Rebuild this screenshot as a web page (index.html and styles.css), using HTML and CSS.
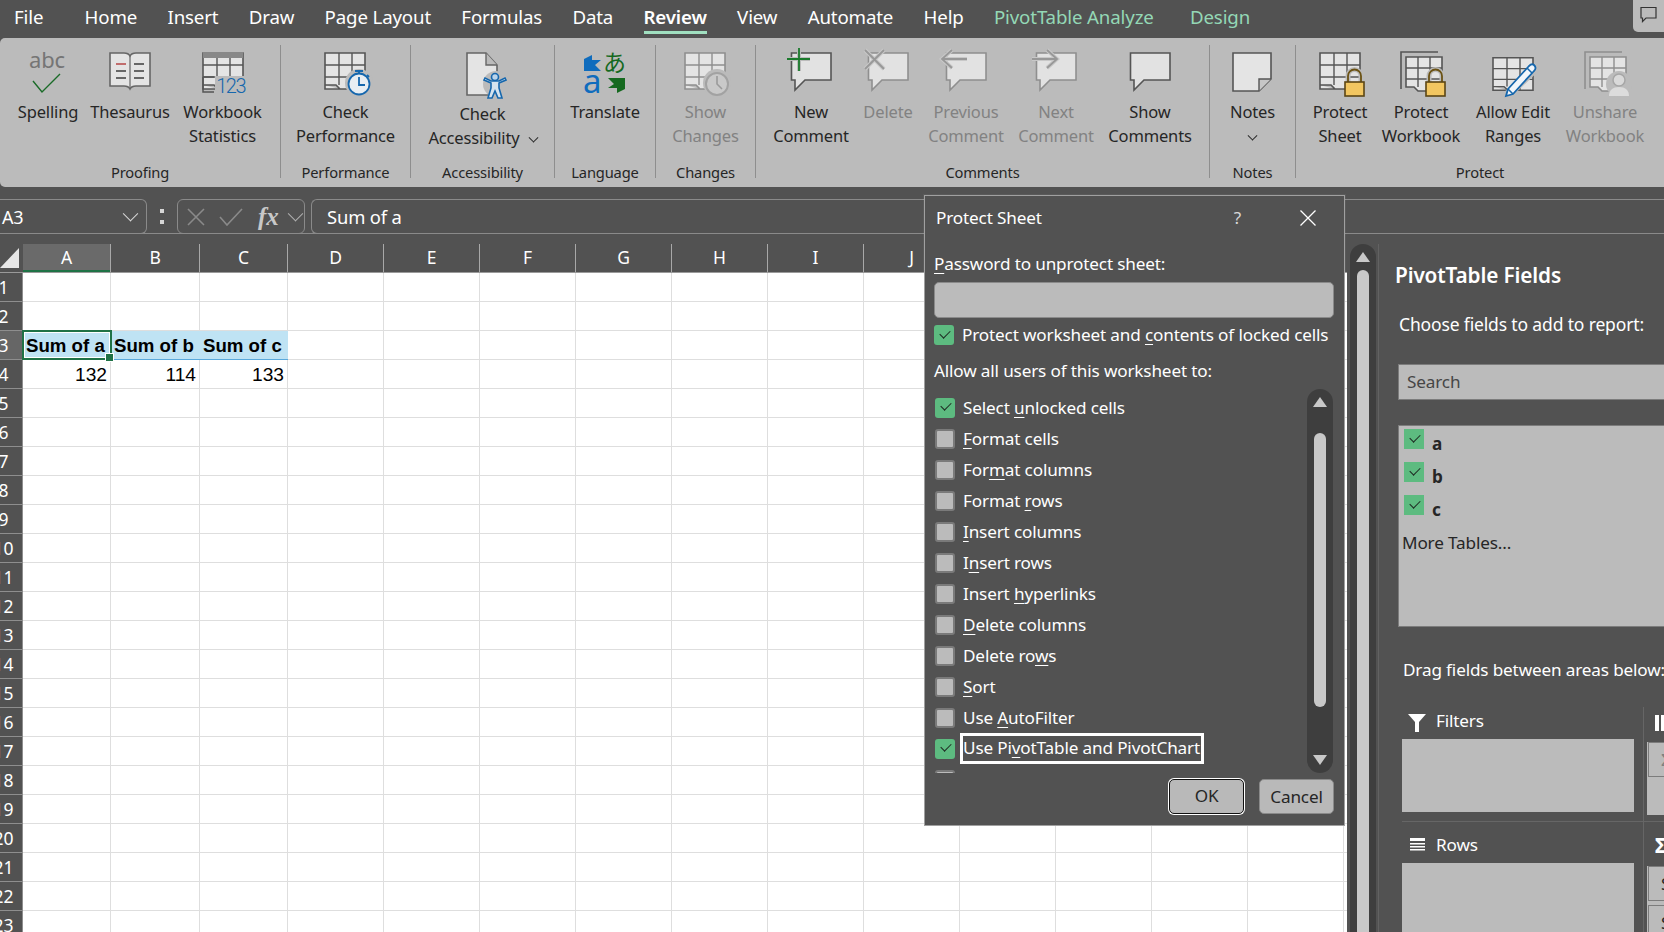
FILE: index.html
```html
<!DOCTYPE html>
<html lang="en">
<head>
<meta charset="utf-8">
<title>Protect Sheet</title>
<link rel="stylesheet" href="styles.css">
</head>
<body>
<svg class="defs" aria-hidden="true">
  <symbol id="grid" viewBox="0 0 42 42" overflow="visible">
    <path fill="#e4e4e4" stroke="currentColor" stroke-width="1.6" d="M1 2H41V38H16L12 34H1Z M1 34V38H12L16 38"/>
    <path fill="none" stroke="currentColor" stroke-width="1.4" d="M1 14H41M1 26H41M15 2V34M28 2V38"/>
  </symbol>
  <symbol id="grid2" viewBox="0 0 42 42" overflow="visible">
    <path fill="none" stroke="currentColor" stroke-width="1.6" d="M1 38V1H38"/>
    <path fill="#e4e4e4" stroke="currentColor" stroke-width="1.6" d="M6 6H42V40H18L14 36H6Z"/>
    <path fill="none" stroke="currentColor" stroke-width="1.4" d="M6 17H42M6 28H42M18 6V36M30 6V40"/>
  </symbol>
  <symbol id="bubble" viewBox="0 0 42 42" overflow="visible">
    <path fill="#e2e2e2" stroke="currentColor" stroke-width="1.6" d="M1.500 2H41V29H15L5 39V29H1.500Z"/>
  </symbol>
  <symbol id="lock" viewBox="0 0 42 42" overflow="visible">
    <path fill="none" stroke="#bbb" stroke-width="5" d="M29 32V25a6.500 6.500 0 0 1 13 0V32"/>
    <path fill="none" stroke="#6b5214" stroke-width="1.8" d="M29 32V25a6.500 6.500 0 0 1 13 0V32"/>
    <rect x="26" y="31" width="19" height="14" fill="#f2c661" stroke="#5b4514" stroke-width="1.6"/>
  </symbol>
</svg>

<header class="tabs">
  <span class="tab first">File</span>
  <span class="tab">Home</span>
  <span class="tab">Insert</span>
  <span class="tab">Draw</span>
  <span class="tab">Page Layout</span>
  <span class="tab">Formulas</span>
  <span class="tab">Data</span>
  <span class="tab active">Review</span>
  <span class="tab">View</span>
  <span class="tab">Automate</span>
  <span class="tab">Help</span>
  <span class="tab ctx">PivotTable Analyze</span>
  <span class="tab ctx">Design</span>
  <span class="comment-btn">
    <svg width="17" height="17" viewBox="0 0 17 17"><path fill="none" stroke="#333" stroke-width="1.2" d="M1 1.500H16V12H6L2.500 15.500V12H1Z"/></svg>
  </span>
</header>

<section class="ribbon">
  <div class="group g1">
    <div class="btns">
      <div class="rb w74">
        <svg class="ic" viewBox="0 0 42 42"><text x="20" y="17" class="abc">abc</text><path fill="none" stroke="#1a6b28" stroke-width="1.400" d="M6 30L15 41L33 23"/></svg>
        <span>Spelling</span>
      </div>
      <div class="rb w90">
        <svg class="ic" viewBox="0 0 42 42"><path fill="#e4e4e4" stroke="#666" stroke-width="1.6" d="M1 2H15C18 2 20 3 21 5C22 3 24 2 27 2H41V35H27C24 35 22 36 21 38C20 36 18 35 15 35H1Z"/><path fill="none" stroke="#666" stroke-width="1.2" d="M21 5V38"/><path fill="none" stroke="#b23a3a" stroke-width="1.4" d="M7 13H17"/><path fill="none" stroke="#3c3c3c" stroke-width="1.4" d="M25 13H35M7 20H17M25 20H35M7 27H17M25 27H35"/></svg>
        <span>Thesaurus</span>
      </div>
      <div class="rb w95">
        <svg class="ic" viewBox="0 0 42 42"><use href="#grid" color="#555"/><rect x="1" y="1" width="40" height="6" fill="#888"/><rect x="13" y="25" width="30" height="18" fill="#bbb"/><path fill="none" stroke="#555" stroke-width="1.5" d="M1 26H12M1 26V41H12"/><text x="43" y="42" class="n123">123</text></svg>
        <span>Workbook<br>Statistics</span>
      </div>
    </div>
    <div class="glabel">Proofing</div>
  </div>
  <i class="sep"></i>
  <div class="group g2">
    <div class="btns">
      <div class="rb">
        <svg class="ic" viewBox="0 0 42 42"><use href="#grid" color="#555"/><circle cx="35" cy="32" r="14" fill="#bbb"/><circle cx="35" cy="33" r="10.500" fill="#e8eef3" stroke="#1667ad" stroke-width="1.800"/><path fill="none" stroke="#1667ad" stroke-width="1.800" d="M35 26V34H41M31 20H39M35 20V23M43 24L45 26"/></svg>
        <span>Check<br>Performance</span>
      </div>
    </div>
    <div class="glabel">Performance</div>
  </div>
  <i class="sep"></i>
  <div class="group g3">
    <div class="btns">
      <div class="rb low">
        <svg class="ic" viewBox="0 0 42 42"><path fill="#e4e4e4" stroke="#666" stroke-width="1.6" d="M6 2H25L36 14V44H6Z"/><path fill="#bbb" stroke="#666" stroke-width="1.400" d="M25 2V14H36"/><circle cx="35" cy="33" r="13" fill="#bbb"/><circle cx="34" cy="26" r="3.500" fill="#bbd4ea" stroke="#1667ad" stroke-width="1.600"/><path fill="#d6e4ef" stroke="#1667ad" stroke-width="1.600" d="M23 29L30 32V37L27 47H31L34 40L37 47H41L38 37V32L45 29L44 27L38 30H30L24 27Z"/></svg>
        <span>Check<br>Accessibility <b class="chev gap"></b></span>
      </div>
    </div>
    <div class="glabel">Accessibility</div>
  </div>
  <i class="sep"></i>
  <div class="group g4">
    <div class="btns">
      <div class="rb">
        <svg class="ic" viewBox="0 0 42 42"><path fill="#0f6cbd" d="M0 8L8 4V9H17L11 14L17 20H0Z"/><text x="-1" y="42" class="tra">a</text><text x="19" y="20" class="trj">あ</text><path fill="#15691f" d="M41 38L33 42V37H24L30 33L24 27H41Z"/></svg>
        <span>Translate</span>
      </div>
    </div>
    <div class="glabel">Language</div>
  </div>
  <i class="sep"></i>
  <div class="group g5">
    <div class="btns">
      <div class="rb off">
        <svg class="ic" viewBox="0 0 42 42"><use href="#grid" color="#8f8f8f"/><circle cx="33" cy="32" r="14" fill="#bbb"/><circle cx="33" cy="33" r="11" fill="#c9c9c9" stroke="#a2a2a2" stroke-width="2"/><path fill="none" stroke="#9a9a9a" stroke-width="1.600" d="M33 25V33L38 38"/></svg>
        <span>Show<br>Changes</span>
      </div>
    </div>
    <div class="glabel">Changes</div>
  </div>
  <i class="sep"></i>
  <div class="group g6">
    <div class="btns">
      <div class="rb w78">
        <svg class="ic" viewBox="0 0 42 42"><use href="#bubble" color="#555"/><path fill="none" stroke="#bbb" stroke-width="4" d="M9 -3V20M-3 8H20"/><path fill="none" stroke="#1a7a2c" stroke-width="1.800" d="M9 -3V20M-3 8H20"/></svg>
        <span>New<br>Comment</span>
      </div>
      <div class="rb w76 off">
        <svg class="ic" viewBox="0 0 42 42"><use href="#bubble" color="#8f8f8f"/><path fill="none" stroke="#c8c8c8" stroke-width="4" d="M-2 -1L17 18M17 -1L-2 18"/><path fill="none" stroke="#989898" stroke-width="1.800" d="M-2 -1L17 18M17 -1L-2 18"/></svg>
        <span>Delete</span>
      </div>
      <div class="rb w80 off">
        <svg class="ic" viewBox="0 0 42 42"><use href="#bubble" color="#8f8f8f"/><path fill="none" stroke="#c8c8c8" stroke-width="4" d="M22 8H-3M7 -1L-3 8L7 17"/><path fill="none" stroke="#989898" stroke-width="1.800" d="M22 8H-3M7 -1L-3 8L7 17"/></svg>
        <span>Previous<br>Comment</span>
      </div>
      <div class="rb w100 off">
        <svg class="ic" viewBox="0 0 42 42"><use href="#bubble" color="#8f8f8f"/><path fill="none" stroke="#c8c8c8" stroke-width="4" d="M-3 8H22M12 -1L22 8L12 17"/><path fill="none" stroke="#989898" stroke-width="1.800" d="M-3 8H22M12 -1L22 8L12 17"/></svg>
        <span>Next<br>Comment</span>
      </div>
      <div class="rb w88">
        <svg class="ic" viewBox="0 0 42 42"><use href="#bubble" color="#555"/></svg>
        <span>Show<br>Comments</span>
      </div>
    </div>
    <div class="glabel">Comments</div>
  </div>
  <i class="sep"></i>
  <div class="group g7">
    <div class="btns">
      <div class="rb">
        <svg class="ic" viewBox="0 0 42 42"><path fill="#e4e4e4" stroke="#555" stroke-width="1.600" d="M2 2H40V28L28 40H2Z"/><path fill="#c6c6c6" stroke="#555" stroke-width="1.400" d="M28 40V28H40"/></svg>
        <span>Notes<br><b class="chev"></b></span>
      </div>
    </div>
    <div class="glabel">Notes</div>
  </div>
  <i class="sep"></i>
  <div class="group g8">
    <div class="btns">
      <div class="rb w80">
        <svg class="ic" viewBox="0 0 42 42"><use href="#grid" color="#555"/><use href="#lock"/></svg>
        <span>Protect<br>Sheet</span>
      </div>
      <div class="rb w82">
        <svg class="ic" viewBox="0 0 42 42"><use href="#grid2" color="#555"/><use href="#lock"/></svg>
        <span>Protect<br>Workbook</span>
      </div>
      <div class="rb w102">
        <svg class="ic" viewBox="0 0 42 42"><g transform="translate(0 5) scale(1 .9)"><use href="#grid" color="#555"/></g><path fill="#bbb" stroke="#bbb" stroke-width="5" d="M14 43L39 16L43 20L18 44Z"/><path fill="#f1f6fb" stroke="#1667ad" stroke-width="1.800" d="M16 38L37 15C39 13 41 13 42 14C44 16 44 18 42 20L21 43L14 45Z"/><path fill="none" stroke="#1667ad" stroke-width="1.500" d="M16 38L21 43M35 17L40 22"/></svg>
        <span>Allow Edit<br>Ranges</span>
      </div>
      <div class="rb w82 off">
        <svg class="ic" viewBox="0 0 42 42"><use href="#grid2" color="#8f8f8f"/><circle cx="35" cy="33" r="13" fill="#bbb"/><circle cx="35" cy="29" r="6" fill="#d9d9d9" stroke="#a6a6a6" stroke-width="1.500"/><path fill="#dcdcdc" d="M25 45C25 39 29 36 35 36C41 36 45 39 45 45Z"/></svg>
        <span>Unshare<br>Workbook</span>
      </div>
    </div>
    <div class="glabel">Protect</div>
  </div>
</section>

<section class="formula">
  <div class="namebox"><span>A3</span><b class="chev big"></b></div>
  <div class="dots"><i></i><i></i></div>
  <div class="fxbox">
    <svg width="18" height="18" viewBox="0 0 18 18"><path fill="none" stroke="#8a8a8a" stroke-width="1.600" d="M1 1L17 17M17 1L1 17"/></svg>
    <svg width="24" height="18" viewBox="0 0 24 18"><path fill="none" stroke="#8a8a8a" stroke-width="1.600" d="M1 9L8 17L23 1"/></svg>
    <em class="fx">fx</em>
    <b class="chev big dim"></b>
  </div>
  <div class="fval">Sum of a</div>
</section>

<main class="work">
  <div class="sheet">
    <div class="chead">
      <div class="corner"></div>
      <div class="ch col-a sel">A</div><div class="ch col-b">B</div><div class="ch col-c">C</div>
      <div class="ch col-w">D</div><div class="ch col-w">E</div><div class="ch col-w">F</div><div class="ch col-w">G</div><div class="ch col-w">H</div><div class="ch col-w">I</div><div class="ch col-w">J</div><div class="ch col-w">K</div><div class="ch col-w">L</div><div class="ch col-w">M</div>
    </div>
    <div class="row"><div class="rh"><span>1</span></div><div class="c col-a"></div><div class="c col-b"></div><div class="c col-c"></div><div class="rest"></div></div>
    <div class="row"><div class="rh"><span>2</span></div><div class="c col-a"></div><div class="c col-b"></div><div class="c col-c"></div><div class="rest"></div></div>
    <div class="row"><div class="rh sel"><span>3</span></div><div class="c col-a thead active-cell">Sum of a</div><div class="c col-b thead">Sum of b</div><div class="c col-c thead">Sum of c</div><div class="rest"></div></div>
    <div class="row"><div class="rh"><span>4</span></div><div class="c col-a num">132</div><div class="c col-b num">114</div><div class="c col-c num">133</div><div class="rest"></div></div>
    <div class="row"><div class="rh"><span>5</span></div><div class="c col-a"></div><div class="c col-b"></div><div class="c col-c"></div><div class="rest"></div></div>
    <div class="row"><div class="rh"><span>6</span></div><div class="c col-a"></div><div class="c col-b"></div><div class="c col-c"></div><div class="rest"></div></div>
    <div class="row"><div class="rh"><span>7</span></div><div class="c col-a"></div><div class="c col-b"></div><div class="c col-c"></div><div class="rest"></div></div>
    <div class="row"><div class="rh"><span>8</span></div><div class="c col-a"></div><div class="c col-b"></div><div class="c col-c"></div><div class="rest"></div></div>
    <div class="row"><div class="rh"><span>9</span></div><div class="c col-a"></div><div class="c col-b"></div><div class="c col-c"></div><div class="rest"></div></div>
    <div class="row"><div class="rh"><span>10</span></div><div class="c col-a"></div><div class="c col-b"></div><div class="c col-c"></div><div class="rest"></div></div>
    <div class="row"><div class="rh"><span>11</span></div><div class="c col-a"></div><div class="c col-b"></div><div class="c col-c"></div><div class="rest"></div></div>
    <div class="row"><div class="rh"><span>12</span></div><div class="c col-a"></div><div class="c col-b"></div><div class="c col-c"></div><div class="rest"></div></div>
    <div class="row"><div class="rh"><span>13</span></div><div class="c col-a"></div><div class="c col-b"></div><div class="c col-c"></div><div class="rest"></div></div>
    <div class="row"><div class="rh"><span>14</span></div><div class="c col-a"></div><div class="c col-b"></div><div class="c col-c"></div><div class="rest"></div></div>
    <div class="row"><div class="rh"><span>15</span></div><div class="c col-a"></div><div class="c col-b"></div><div class="c col-c"></div><div class="rest"></div></div>
    <div class="row"><div class="rh"><span>16</span></div><div class="c col-a"></div><div class="c col-b"></div><div class="c col-c"></div><div class="rest"></div></div>
    <div class="row"><div class="rh"><span>17</span></div><div class="c col-a"></div><div class="c col-b"></div><div class="c col-c"></div><div class="rest"></div></div>
    <div class="row"><div class="rh"><span>18</span></div><div class="c col-a"></div><div class="c col-b"></div><div class="c col-c"></div><div class="rest"></div></div>
    <div class="row"><div class="rh"><span>19</span></div><div class="c col-a"></div><div class="c col-b"></div><div class="c col-c"></div><div class="rest"></div></div>
    <div class="row"><div class="rh"><span>20</span></div><div class="c col-a"></div><div class="c col-b"></div><div class="c col-c"></div><div class="rest"></div></div>
    <div class="row"><div class="rh"><span>21</span></div><div class="c col-a"></div><div class="c col-b"></div><div class="c col-c"></div><div class="rest"></div></div>
    <div class="row"><div class="rh"><span>22</span></div><div class="c col-a"></div><div class="c col-b"></div><div class="c col-c"></div><div class="rest"></div></div>
    <div class="row"><div class="rh"><span>23</span></div><div class="c col-a"></div><div class="c col-b"></div><div class="c col-c"></div><div class="rest"></div></div>
  </div>

  <div class="vscroll sheet-scroll"><i class="up"></i><i class="thumb"></i></div>

  <aside class="pane">
    <h2 class="ptitle">PivotTable Fields</h2>
    <p class="choose">Choose fields to add to report:</p>
    <div class="search">Search</div>
    <div class="fields">
      <div class="field"><i class="cb on"></i><b>a</b></div>
      <div class="field"><i class="cb on"></i><b>b</b></div>
      <div class="field"><i class="cb on"></i><b>c</b></div>
      <div class="more">More Tables...</div>
    </div>
    <p class="drag">Drag fields between areas below:</p>
    <div class="areas">
      <div class="area a-filters">
        <div class="ahead"><svg width="18" height="18" viewBox="0 0 18 18"><path fill="#fff" d="M0 0H18L11 8V18H7V8Z"/></svg><span>Filters</span></div>
        <div class="abox"></div>
      </div>
      <div class="area a-cols">
        <div class="ahead"><svg width="18" height="16" viewBox="0 0 18 16"><path fill="#fff" d="M0 0H4V16H0ZM6 0H10V16H6Z"/></svg></div>
        <div class="abox"><div class="aitem dimtext">Σ</div></div>
      </div>
      <div class="area a-rows">
        <div class="ahead"><svg width="18" height="14" viewBox="0 0 18 14"><path fill="#fff" d="M2 0H17V3H2ZM2 5H17V6.500H2ZM2 8H17V9.500H2ZM2 11H17V12.500H2Z"/></svg><span>Rows</span></div>
        <div class="abox"></div>
      </div>
      <div class="area a-vals">
        <div class="ahead"><span class="sigma">Σ</span></div>
        <div class="abox"><div class="aitem">Sum of a</div><div class="aitem">Sum of b</div></div>
      </div>
    </div>
  </aside>
</main>

<section class="dialog" role="dialog" aria-label="Protect Sheet">
  <div class="dtitle">
    <span class="dname">Protect Sheet</span>
    <span class="dhelp">?</span>
    <svg width="16" height="16" viewBox="0 0 16 16"><path fill="none" stroke="#fff" stroke-width="1.300" d="M.5 .5L15.500 15.500M15.500 .5L.5 15.500"/></svg>
  </div>
  <label class="dlabel"><u>P</u>assword to unprotect sheet:</label>
  <div class="dinput"></div>
  <div class="dcheck"><i class="cb on"></i><span>Protect worksheet and <u>c</u>ontents of locked cells</span></div>
  <div class="dlabel allow">Allow all users of this worksheet to:</div>
  <div class="dlist">
    <div class="items">
      <div class="item"><i class="cb on"></i><span>Select <u>u</u>nlocked cells</span></div>
      <div class="item"><i class="cb"></i><span><u>F</u>ormat cells</span></div>
      <div class="item"><i class="cb"></i><span>For<u>m</u>at columns</span></div>
      <div class="item"><i class="cb"></i><span>Format <u>r</u>ows</span></div>
      <div class="item"><i class="cb"></i><span><u>I</u>nsert columns</span></div>
      <div class="item"><i class="cb"></i><span>I<u>n</u>sert rows</span></div>
      <div class="item"><i class="cb"></i><span>Insert <u>h</u>yperlinks</span></div>
      <div class="item"><i class="cb"></i><span><u>D</u>elete columns</span></div>
      <div class="item"><i class="cb"></i><span>Delete ro<u>w</u>s</span></div>
      <div class="item"><i class="cb"></i><span><u>S</u>ort</span></div>
      <div class="item"><i class="cb"></i><span>Use <u>A</u>utoFilter</span></div>
      <div class="item"><i class="cb on"></i><span class="focus">Use Pi<u>v</u>otTable and PivotChart</span></div>
      <div class="item"><i class="cb"></i><span>Edit <u>o</u>bjects</span></div>
    </div>
    <div class="vscroll list-scroll"><i class="up"></i><i class="thumb"></i><i class="down"></i></div>
  </div>
  <div class="dbtns">
    <div class="btn primary">OK</div>
    <div class="btn">Cancel</div>
  </div>
</section>
</body>
</html>
```

FILE: styles.css
```css
* { box-sizing: border-box; }
html, body { margin: 0; height: 932px; overflow: hidden; }
body {
  width: 1664px;
  background: #525252;
  color: #fff;
  font: 17.150px/24px "Noto Sans", "Open Sans", sans-serif;
  letter-spacing: -.15px;
  position: relative;
}
.defs { position: absolute; width: 0; height: 0; }

/* tab strip */
.tabs { display: flex; align-items: flex-start; height: 38px; padding: 5px 0 0 14px; gap: 30.300px; position: relative; font-size: 18.700px; }
.tab { display: block; height: 28px; line-height: 24px; white-space: nowrap; }
.tab.first { margin-right: 11px; }
.tab.active { font-weight: 600; border-bottom: 3px solid #a0dfc0; height: 29px; }
.tab.ctx { color: #94d8b6; }
.tab.ctx + .tab.ctx { margin-left: 6px; }
.comment-btn { position: absolute; right: 0; top: 0; width: 31px; height: 32px; background: #bbb; border-bottom-left-radius: 5px; display: flex; align-items: center; justify-content: center; padding-bottom: 4px; }

/* ribbon */
.ribbon { display: flex; height: 149px; background: #bbb; color: #262626; border-radius: 5px 0 0 5px; font-size: 16.500px; }
.sep { flex: none; width: 1px; margin: 7px 0 9px; background: #8e8e8e; }
.group { flex: none; display: flex; flex-direction: column; height: 149px; padding-top: 13px; }
.g1 { width: 280px; } .g2 { width: 129px; } .g3 { width: 143px; } .g4 { width: 100px; }
.g5 { width: 99px; } .g6 { width: 453px; } .g7 { width: 85px; } .g8 { width: 368px; }
.btns { display: flex; justify-content: center; flex: 1; }
.g1 .btns { justify-content: flex-start; padding-left: 11px; }
.g6 .btns { justify-content: flex-start; padding-left: 16px; }
.g8 .btns { justify-content: flex-start; padding-left: 4px; }
.rb { display: flex; flex-direction: column; align-items: center; text-align: center; white-space: nowrap; }
.rb span { margin-top: 7px; line-height: 24px; }
.rb.low span { margin-top: 9px; }
.rb.off { color: #828282; }
.ic { width: 42px; height: 42px; overflow: visible; flex: none; }
.w74 { width: 74px; } .w76 { width: 76px; } .w78 { width: 78px; } .w80 { width: 80px; } .w82 { width: 82px; }
.w88 { width: 88px; } .w90 { width: 90px; } .w95 { width: 95px; } .w100 { width: 100px; } .w102 { width: 102px; }
.glabel { height: 24px; margin-bottom: 3px; text-align: center; font-size: 14.700px; line-height: 24px; }
.abc { font: 22px "Noto Sans", sans-serif; fill: #757575; text-anchor: middle; }
.n123 { font: 300 20px Roboto, "Noto Sans", sans-serif; fill: #1667ad; text-anchor: end; letter-spacing: -1.500px; }
.tra { font: 33px "Noto Sans", sans-serif; fill: #0f6cbd; }
.trj { font: 23px "Noto Sans CJK JP", sans-serif; fill: #15691f; }
.chev { display: inline-block; width: 7px; height: 7px; border: solid currentColor; border-width: 0 1.800px 1.800px 0; transform: rotate(45deg) translate(-2px, -2px); }
.chev.gap { margin-left: 6px; }
.chev.big { width: 11px; height: 11px; border-width: 0 1.500px 1.500px 0; border-color: #d8d8d8; }
.chev.dim { border-color: #b0b0b0; }

/* formula bar */
.formula { display: flex; align-items: stretch; height: 47px; padding-top: 12px; border-bottom: 1px solid #8a8a8a; }
.namebox, .fxbox, .fval { height: 35px; border: 1px solid #8a8a8a; border-radius: 6px; }
.namebox { width: 147px; display: flex; justify-content: space-between; align-items: center; padding: 0 10px 0 2px; border-left: 0; border-radius: 0 6px 6px 0; font-size: 18px; }
.dots { width: 30px; display: flex; flex-direction: column; align-items: center; justify-content: center; gap: 7px; }
.dots i { width: 4px; height: 4px; background: #d6d6d6; display: block; }
.fxbox { width: 128px; display: flex; align-items: center; padding-left: 9px; gap: 14px; color: #c8c8c8; }
.fx { font: italic 700 25px/24px "Liberation Serif", serif; margin-left: 1px; }
.fxbox .chev { margin-left: -3px; }
.fval { flex: 1; margin-left: 6px; padding: 0 0 0 15px; border-right: 0; border-radius: 6px 0 0 6px; line-height: 33px; font-size: 18.400px; }

/* sheet */
.work { display: flex; height: 698px; padding-top: 10px; }
.sheet { width: 1347px; flex: none; overflow: hidden; }
.chead { display: flex; height: 29px; border-bottom: 1px solid #9a9a9a; }
.corner { width: 23px; flex: none; position: relative; }
.corner::after { content: ""; position: absolute; left: 0; top: 4px; border-style: solid; border-width: 0 0 20px 19px; border-color: transparent transparent #e6e6e6; }
.ch { flex: none; text-align: center; line-height: 27px; font-size: 17.500px; border-right: 1px solid #a8a8a8; }
.ch.sel { background: #6a6a6a; box-shadow: inset 0 -2px #1f7246; }
.col-a { width: 88px; } .col-b { width: 89px; } .col-c { width: 88px; } .col-w { width: 96px; }
.row { display: flex; height: 29px; background: #fff; color: #000; font: 18.670px/29px "Liberation Sans", Arial, sans-serif; letter-spacing: 0; border-bottom: 1px solid #dedede; }
.rh { flex: none; width: 23px; margin-bottom: -1px; background: #525252; color: #fff; border-bottom: 1px solid #8e8e8e; border-right: 1px solid #8e8e8e; overflow: hidden; font: 17.500px/29px "Noto Sans", sans-serif; }
.rh span { display: block; width: 37px; margin-left: -15px; text-align: center; }
.rh.sel { background: #666; }
.c { flex: none; border-right: 1px solid #dedede; padding: 0 3px; white-space: nowrap; }
.c.thead { background: #bfe3f4; font-weight: 700; margin-bottom: -1px; height: 29px; border-right: 0; border-bottom: 1px solid #5aa9dc; }
.c.num { text-align: right; font-size: 19.200px; }
.active-cell { position: relative; }
.active-cell::before { content: ""; position: absolute; left: -1px; top: -1px; right: -1px; bottom: -1px; border: 2px solid #1f7246; box-shadow: inset 0 0 0 1px #fff; }
.active-cell::after { content: ""; position: absolute; right: -3px; bottom: -3px; width: 7px; height: 7px; background: #1f7246; border: 1px solid #fff; }
.rest { flex: 1; background: repeating-linear-gradient(to right, #fff 0 95px, #dedede 95px 96px); }

/* scrollbars */
.vscroll { flex: none; width: 26px; background: #3e3e3e; border-radius: 13px 13px 0 0; display: flex; flex-direction: column; align-items: center; position: relative; }
.sheet-scroll { margin-left: 3px; }
.vscroll .up, .vscroll .down { display: block; width: 0; height: 0; border-style: solid; border-color: transparent; border-width: 0 7px 10px; border-bottom-color: #c8c8c8; }
.vscroll .down { border-width: 10px 7px 0; border-top-color: #c8c8c8; }
.vscroll .thumb { display: block; width: 12px; background: #c8c8c8; border-radius: 6px; }
.sheet-scroll .up { margin-top: 8px; }
.sheet-scroll .thumb { margin-top: 8px; flex: 1; border-radius: 6px 6px 0 0; }
.list-scroll { border-radius: 13px; height: 384px; position: absolute; right: 1px; top: 0; }
.list-scroll .up { margin-top: 8px; }
.list-scroll .thumb { margin-top: 26px; height: 274px; }
.list-scroll .down { margin-top: 48px; }

/* pivot pane */
.pane { flex: none; width: 286px; margin-left: 2px; border-left: 1px solid #626262; padding-left: 16px; overflow: hidden; }
.ptitle { margin: 18px 0 0; font-size: 20.800px; line-height: 26px; font-weight: 600; white-space: nowrap; }
.choose { margin: 24px 0 0 4px; line-height: 24px; white-space: nowrap; font-size: 17.500px; }
.search { margin: 28px 0 0 3px; width: 300px; height: 36px; background: #bbb; border: 1px solid #7c7c7c; color: #464646; line-height: 33px; padding-left: 8px; }
.fields { margin: 25px 0 0 3px; width: 300px; height: 202px; background: #bbb; border: 1px solid #7c7c7c; padding: 3px 0 0 5px; color: #262626; }
.field { display: flex; height: 33px; align-items: flex-start; gap: 8px; }
.field b { line-height: 28px; font-weight: 700; padding-top: 1px; }
.cb { flex: none; display: block; width: 20px; height: 20px; border-radius: 3px; background: #bbb; border: 2px solid #7a7a7a; position: relative; }
.cb.on { background: #5dbb80; border: 0; }
.cb.on::after { content: ""; position: absolute; left: 6px; top: 4.500px; width: 9px; height: 5px; border: solid #1f2a22; border-width: 0 0 1.800px 1.800px; transform: rotate(-45deg); }
.field .cb { border-radius: 0; }
.more { margin: 3px 0 0 -2px; line-height: 24px; }
.drag { margin: 31px 0 0 8px; line-height: 24px; white-space: nowrap; }
.areas { display: grid; grid-template-columns: 241px 60px; grid-template-rows: 115px 120px; margin: 25px 0 0 7px; }
.area { overflow: hidden; }
.a-filters, .a-cols { border-bottom: 1px solid #666; }
.a-cols, .a-vals { border-left: 1px solid #666; padding-left: 3px; }
.a-filters, .a-rows { padding-right: 9px; }
.ahead { height: 32px; display: flex; align-items: center; gap: 10px; padding-left: 6px; }
.a-filters .ahead span { position: relative; top: -2px; }
.a-rows .ahead, .a-vals .ahead { height: 41px; padding-top: 5px; }
.a-cols .ahead, .a-vals .ahead { padding-left: 8px; }
.abox { height: 73px; background: #bbb; }
.a-rows .abox, .a-vals .abox { height: 80px; }
.aitem { margin: 3px 0 0 1px; width: 100px; height: 35px; border: 1px solid #7c7c7c; color: #262626; padding-left: 12px; line-height: 33px; white-space: nowrap; }
.a-vals .aitem { margin-bottom: 4px; }
.dimtext { color: #808080; }
.sigma { font-size: 21px; font-weight: 700; }

/* dialog */
.dialog { position: absolute; left: 924px; top: 195px; width: 421px; height: 631px; background: #525252; border: 1px solid #a0a0a0; padding: 0 10px 0 9px; box-shadow: 0 0 0 1px rgba(255,255,255,.05); }
.dtitle { display: flex; align-items: center; height: 44px; padding: 0 18px 0 2px; }
.dname { flex: 1; }
.dhelp { margin-right: 59px; color: #d8d8d8; }
.dlabel { display: block; height: 24px; margin-top: 12px; white-space: nowrap; }
.dlabel.allow { margin-top: 14px; }
.dinput { height: 36px; margin-top: 6px; background: #bbb; border: 1px solid #8a8a8a; border-radius: 5px; }
.dcheck { display: flex; align-items: center; gap: 8px; height: 20px; margin-top: 7px; white-space: nowrap; }
u { text-underline-offset: 3px; text-decoration-thickness: 1px; }
.dlist { position: relative; height: 384px; margin-top: 6px; }
.items { height: 384px; overflow: hidden; padding: 3px 0 0 1px; }
.item { display: flex; align-items: center; gap: 8px; height: 31px; white-space: nowrap; }
.focus { border: 3px solid #fff; padding: 0 1px 0 0; margin-left: -3px; height: 31px; line-height: 24px; }
.dbtns { display: flex; justify-content: flex-end; gap: 15px; margin-top: 6px; }
.btn { width: 75px; height: 35px; background: #b9b9b9; color: #262626; border: 1px solid #8a8a8a; border-radius: 5px; text-align: center; line-height: 33px; }
.btn.primary { border: 1.500px solid #111; box-shadow: 0 0 0 1px #fff; line-height: 32px; }
```
